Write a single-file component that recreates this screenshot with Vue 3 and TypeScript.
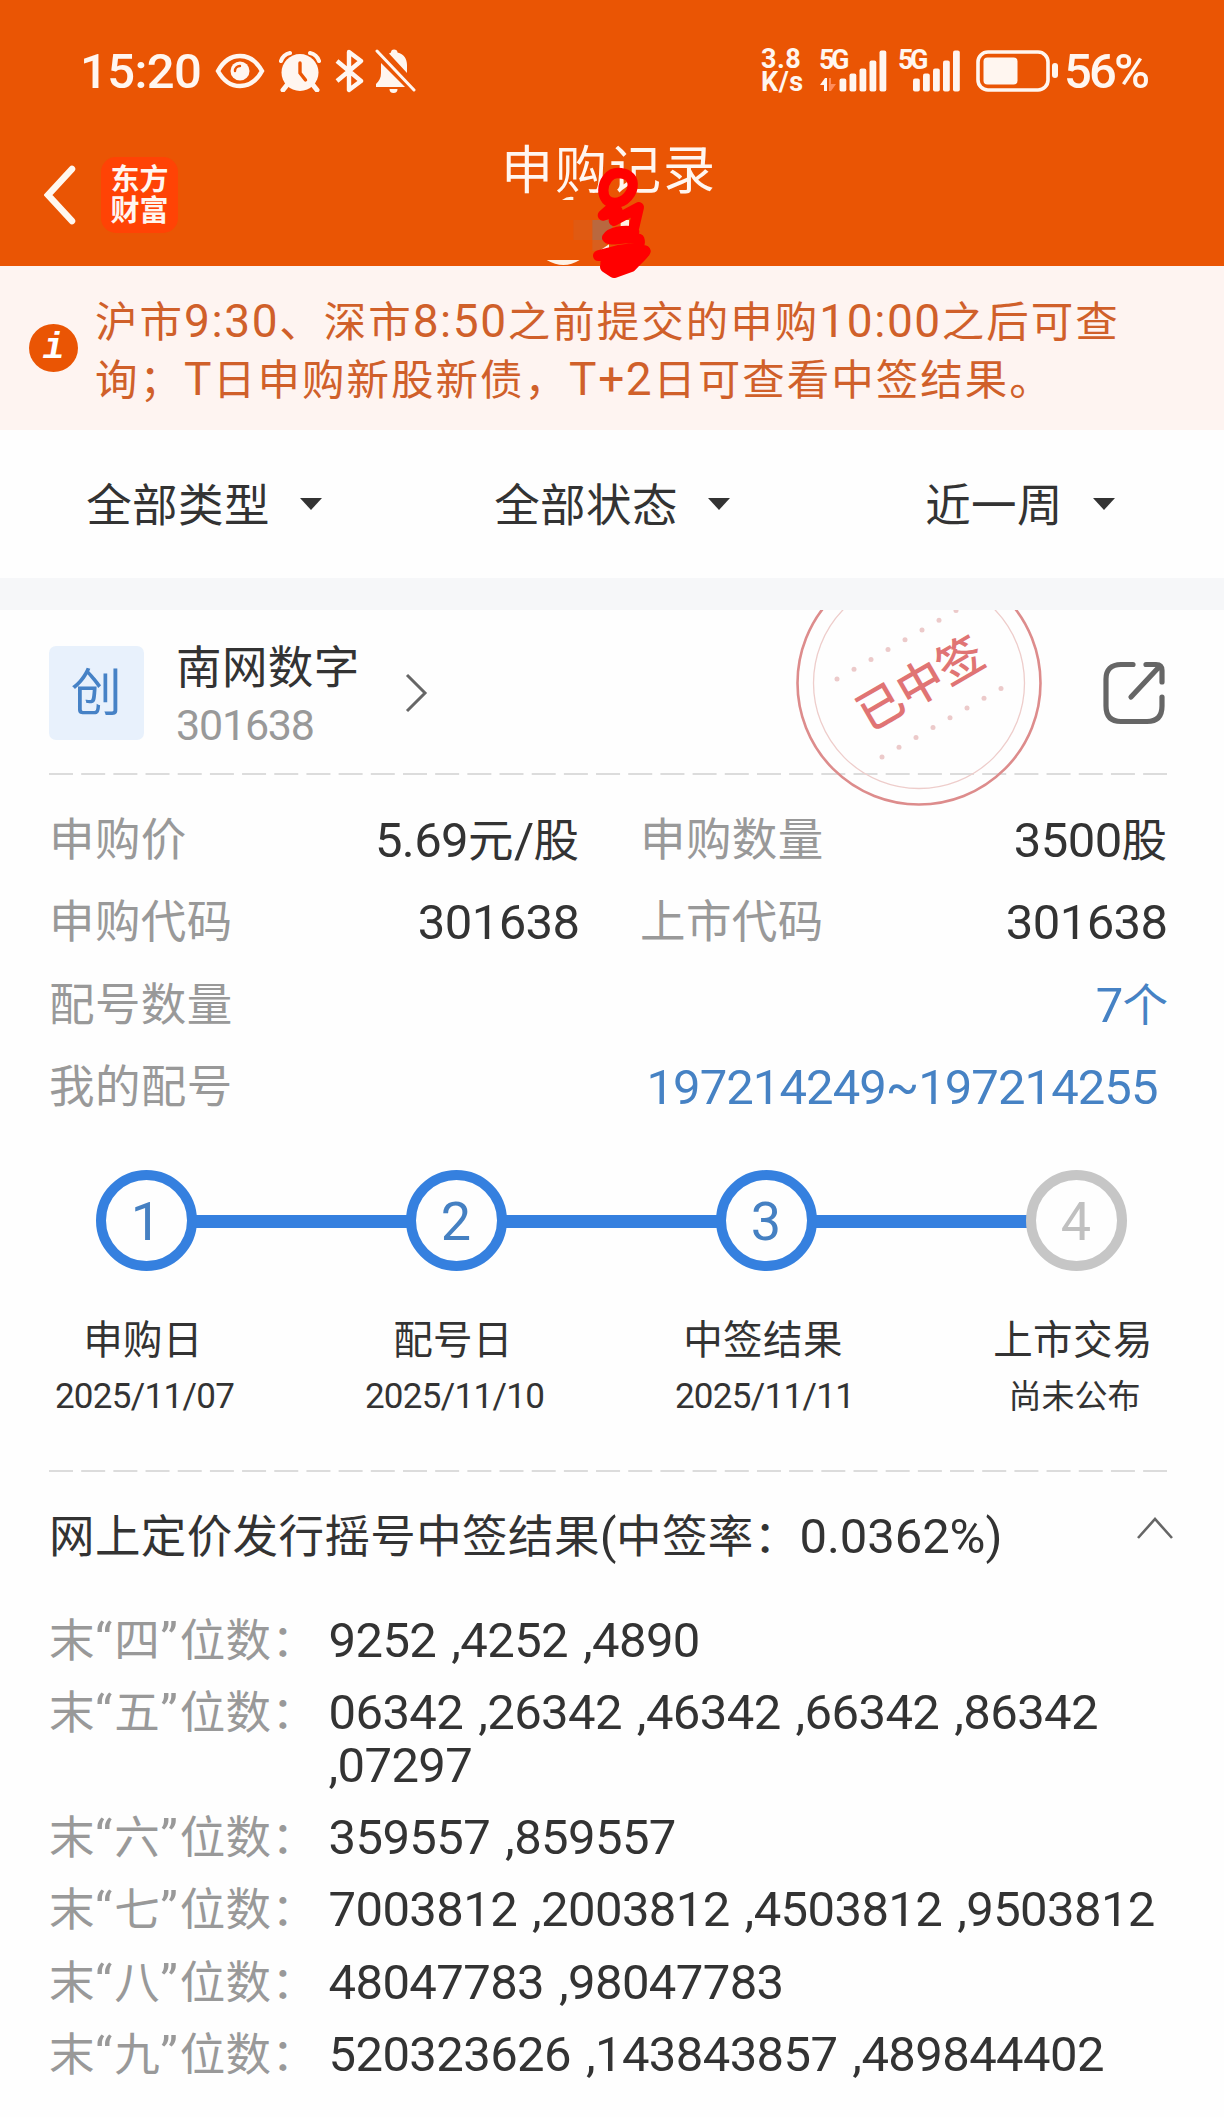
<script setup lang="ts">
interface Segment {
    text: string,
    num: boolean,
}

interface Step {
    no: number,
    label: string,
    date: string,
    done: boolean,
}

const filters = ['全部类型', '全部状态', '近一周'];

const notice = [
    '沪市9:30、深市8:50之前提交的申购10:00之后可查',
    '询；T日申购新股新债，T+2日可查看中签结果。',
];

const infoPairs = [
    { label: '申购价', value: '5.69元/股' },
    { label: '申购数量', value: '3500股' },
    { label: '申购代码', value: '301638' },
    { label: '上市代码', value: '301638' },
];

const steps: Step[] = [
    { no: 1, label: '申购日', date: '2025/11/07', done: true },
    { no: 2, label: '配号日', date: '2025/11/10', done: true },
    { no: 3, label: '中签结果', date: '2025/11/11', done: true },
    { no: 4, label: '上市交易', date: '尚未公布', done: false },
];

const results = [
    { digit: '四', numbers: '9252 ,4252 ,4890' },
    { digit: '五', numbers: '06342 ,26342 ,46342 ,66342 ,86342 ,07297' },
    { digit: '六', numbers: '359557 ,859557' },
    { digit: '七', numbers: '7003812 ,2003812 ,4503812 ,9503812' },
    { digit: '八', numbers: '48047783 ,98047783' },
    { digit: '九', numbers: '520323626 ,143843857 ,489844402' },
];

const signalHeights = [13, 18, 23, 31, 41];
const stampDots = [0, 1, 2, 3, 4, 5, 6, 7];

// latin runs are set slightly larger than the chinese ones
const split = (text: string): Segment[] =>
    (text.match(/[\x20-\x7e]+|[^\x20-\x7e]+/g) || []).map((part) => ({
        text: part,
        num: /^[\x20-\x7e]/.test(part),
    }));
</script>

<template>
    <div class="page">
        <header class="header">
            <div class="status">
                <div class="status-left">
                    <span class="time">15:20</span>
                    <svg class="i-eye" width="50" height="36" viewBox="0 0 50 36">
                        <path d="M3 18C9 7 17 3 25 3s16 4 22 15C41 29 33 33 25 33S9 29 3 18z" fill="none" stroke="#fff6f0" stroke-width="4.4" />
                        <circle cx="25" cy="18" r="9.5" fill="#fff6f0" />
                        <path d="M20 18a5 5 0 0 1 5-5" fill="none" stroke="#ea5504" stroke-width="2.4" stroke-linecap="round" />
                    </svg>
                    <svg class="i-alarm" width="42" height="42" viewBox="0 0 42 42">
                        <circle cx="21" cy="22.500" r="18.500" fill="#fff6f0" />
                        <path d="M2 11a12 12 0 0 1 9-8M40 11a12 12 0 0 0-9-8" fill="none" stroke="#fff6f0" stroke-width="4" stroke-linecap="round" />
                        <path d="M8 35l-4 5M34 35l4 5" stroke="#fff6f0" stroke-width="5" stroke-linecap="round" />
                        <path d="M21 13v10l5.500 7" fill="none" stroke="#ea5504" stroke-width="3.400" stroke-linecap="round" />
                    </svg>
                    <svg class="i-bt" width="30" height="44" viewBox="0 0 30 44">
                        <path d="M2 12l24 20-12 9V3l12 9L2 32" fill="none" stroke="#fff6f0" stroke-width="4.400" stroke-linejoin="round" />
                    </svg>
                    <svg class="i-bell" width="42" height="46" viewBox="0 0 42 46">
                        <path d="M19 1.500c2 0 3.500 1 3.500 3C29 6 32 11 32 17v8L14 5.500c.6-.4 1.300-.7 2-1 0-2 1-3 3-3zM6 15l24 24H1v-3c3-3 5-6 5-11z" fill="#fff6f0" />
                        <path d="M2 3l37 39" stroke="#fff6f0" stroke-width="3" stroke-linecap="round" />
                        <path d="M14.500 41h8a4 4 0 0 1-8 0z" fill="#fff6f0" />
                    </svg>
                </div>
                <div class="status-right">
                    <div class="speed">
                        <span>3.8</span>
                        <span>K/s</span>
                    </div>
                    <div
                        v-for="sim in 2"
                        :key="sim"
                        class="signal"
                        :class="{ first: sim === 1 }"
                    >
                        <span class="net">5G</span>
                        <svg class="bars" width="68" height="42" viewBox="0 0 68 42">
                            <rect
                                v-for="(height, i) in signalHeights"
                                :key="i"
                                :x="(sim === 1 ? 20.5 : 15) + i * 10"
                                :y="41.500 - height"
                                width="6.800"
                                :height="height"
                                rx="2"
                                fill="#fff6f0"
                            />
                            <g v-if="sim === 1">
                                <path d="M1 35l5-7h2v13H5v-6z" fill="#fff6f0" />
                                <path d="M10 28h2v6h5l-5 7h-2z" fill="#ff8c5a" />
                            </g>
                        </svg>
                    </div>
                    <svg class="battery" width="83" height="42" viewBox="0 0 83 42">
                        <rect x="2" y="2" width="70" height="38" rx="10" fill="none" stroke="#fff6f0" stroke-width="3.600" />
                        <rect x="7.500" y="7.500" width="34" height="27" rx="4" fill="#fff6f0" />
                        <rect x="76" y="13" width="6" height="15" rx="3" fill="#fff6f0" />
                    </svg>
                    <span class="percent">56%</span>
                </div>
            </div>
            <div class="nav">
                <div class="nav-left">
                    <svg width="34" height="60" viewBox="0 0 34 60">
                        <path d="M28 4L4 30l24 26" fill="none" stroke="#fff8f0" stroke-width="6.500" stroke-linecap="round" />
                    </svg>
                    <div class="logo">
                        <span>东方</span>
                        <span>财富</span>
                    </div>
                </div>
                <h1 class="title">申购记录</h1>
            </div>
            <svg class="scribble" width="140" height="145" viewBox="0 0 420 435">
                <path d="M130 240h58v60h-58z" fill="#e05a12" />
                <path d="M187 240h60v60h-60z" fill="#b9683f" />
                <path d="M187 300h40v32h-40z" fill="#d85f1e" />
                <path d="M50 360h99q-48 30-99 0zM96 180q16-12 34-9v9zM272 240h25v20h-25zM212 330l25-17v12z" fill="#fff3e6" />
                <g fill="none" stroke="#ff0000" stroke-linecap="round" stroke-linejoin="round">
                    <path d="M264 99c-26 0-44 26-44 52 0 24 14 38 34 38 30 0 56-30 54-58-1-20-20-32-44-32z" stroke-width="31" />
                    <path d="M260 190L219 226 262 212 252 242 326 202 312 262" stroke-width="32" />
                    <path d="M312 275c-32-6-72 2-80 18 6 12 62-6 95 4 10 30-30 30-62 34l-60 16h60l80-14c-18 30-50 46-66 50l-52-14 60-14 40-24" stroke-width="32" />
                    <path d="M228 380l24 16 50-18 42-44-62 10z" fill="#ff0000" stroke-width="36" />
                </g>
            </svg>
        </header>

        <section class="notice">
            <span class="notice-icon">i</span>
            <div class="notice-text">
                <p
                    v-for="(line, i) in notice"
                    :key="i"
                    class="notice-line"
                >
                    <span
                        v-for="(seg, j) in split(line)"
                        :key="j"
                        :class="{ num: seg.num }"
                    >{{ seg.text }}</span>
                </p>
            </div>
        </section>

        <section class="filters">
            <div
                v-for="name in filters"
                :key="name"
                class="filter"
            >
                <span>{{ name }}</span>
                <i class="caret" />
            </div>
        </section>

        <main class="card">
            <div class="stock">
                <span class="board">创</span>
                <div class="stock-name">
                    <span class="name">南网数字</span>
                    <span class="code">301638</span>
                </div>
                <svg class="go" width="24" height="40" viewBox="0 0 24 40">
                    <path d="M3 2l18 18L3 38" fill="none" stroke="#666" stroke-width="3" />
                </svg>
                <svg class="share" width="62" height="64" viewBox="0 0 62 64">
                    <path d="M30 3.500H18C8 3.500 3 9 3 18v27c0 10 5 15.500 15 15.500h26c10 0 15-5.500 15-15.500V36" fill="none" stroke="#666" stroke-width="5.200" stroke-linecap="round" />
                    <path d="M43 3.500h10c4 0 6 2 6 6V21M56 6L28 36" fill="none" stroke="#666" stroke-width="5.200" stroke-linecap="round" />
                </svg>
            </div>
            <svg class="stamp" width="250" height="198" viewBox="0 0 250 198">
                <circle cx="125" cy="73" r="121.500" fill="none" stroke="#dd8c8c" stroke-width="2.600" />
                <circle cx="125" cy="73" r="105.500" fill="none" stroke="#eecdcb" stroke-width="1.300" />
                <circle
                    v-for="dot in stampDots"
                    :key="'t' + dot"
                    :cx="43 + dot * 17"
                    :cy="69 - dot * 9.8"
                    r="2.500"
                    fill="#eccaca"
                />
                <circle
                    v-for="dot in stampDots"
                    :key="'b' + dot"
                    :cx="88 + dot * 17"
                    :cy="147 - dot * 9.8"
                    r="2.500"
                    fill="#eccaca"
                />
                <text x="126" y="90" text-anchor="middle" transform="rotate(-30 126 73)" class="stamp-text">已中签</text>
            </svg>

            <svg class="divider" width="1118" height="2" viewBox="0 0 1118 2">
                <path d="M0 1h1118" stroke="#dcdcdc" stroke-width="2" stroke-dasharray="24 8.180" />
            </svg>

            <div class="pairs">
                <div
                    v-for="(item, i) in infoPairs"
                    :key="i"
                    class="row"
                >
                    <span class="label">{{ item.label }}</span>
                    <span>
                        <span
                            v-for="(seg, j) in split(item.value)"
                            :key="j"
                            :class="{ num: seg.num }"
                        >{{ seg.text }}</span>
                    </span>
                </div>
            </div>
            <div class="row">
                <span class="label">配号数量</span>
                <span class="link"><span class="num">7</span>个</span>
            </div>
            <div class="row">
                <span class="label">我的配号</span>
                <span class="link range num">197214249~197214255</span>
            </div>

            <div class="steps">
                <div
                    v-for="step in steps"
                    :key="step.no"
                    class="step"
                    :class="{ todo: !step.done }"
                >
                    <span class="circle">{{ step.no }}</span>
                    <span class="step-label">{{ step.label }}</span>
                    <span class="step-date" :class="{ pending: !step.done }">{{ step.date }}</span>
                </div>
            </div>

            <svg class="divider" width="1118" height="2" viewBox="0 0 1118 2">
                <path d="M0 1h1118" stroke="#dcdcdc" stroke-width="2" stroke-dasharray="24 8.180" />
            </svg>

            <div class="result-head">
                <span>网上定价发行摇号中签结果<span class="num">(</span>中签率：<span class="num rate">0.0362%)</span></span>
                <svg width="38" height="24" viewBox="0 0 38 24">
                    <path d="M2 22L19 3l17 19" fill="none" stroke="#666" stroke-width="2.600" />
                </svg>
            </div>
            <div
                v-for="item in results"
                :key="item.digit"
                class="result"
            >
                <span class="result-label">末<span class="quote">“</span>{{ item.digit }}<span class="quote">”</span>位数：</span>
                <span class="result-value num">{{ item.numbers }}</span>
            </div>
        </main>
    </div>
</template>

<style>
body {
    margin: 0;
    background: #fefefe;
}
</style>

<style scoped>
.page {
    width: 1224px;
    height: 2117px;
    overflow: hidden;
    background: #fefefe;
    color: #333;
    font-family: Roboto, "Noto Sans CJK SC", sans-serif;
    font-size: 45.5px;
    letter-spacing: .4px;
    white-space: nowrap;
}

.page svg {
    display: block;
    flex: none;
}

.num {
    font-size: 49px;
    letter-spacing: -.6px;
}

/* header */
.header {
    position: relative;
    height: 266px;
    background: #ea5504;
    color: #fff6f0;
}

.status {
    display: flex;
    justify-content: space-between;
    height: 142px;
    padding: 0 73px 0 80px;
    font-weight: 500;
}

.status-left,
.status-right {
    display: flex;
    align-items: center;
}

.time,
.percent {
    margin-top: 2px;
    font-size: 49px;
    line-height: 60px;
    letter-spacing: -.6px;
}

.time {
    width: 135px;
}

.i-alarm {
    margin-left: 14px;
}

.i-bt {
    margin-left: 14px;
}

.i-bell {
    margin-left: 10px;
}

.speed {
    display: flex;
    flex-direction: column;
    width: 58px;
    font-size: 27px;
    font-weight: 700;
    line-height: 23px;
    letter-spacing: .5px;
}

.signal {
    position: relative;
    width: 64px;
    height: 42px;
    margin-right: 14px;
}

.signal.first {
    width: 68px;
    margin-right: 11px;
}

.net {
    position: absolute;
    top: -1px;
    left: 0;
    font-size: 27px;
    font-weight: 700;
    line-height: 22px;
    letter-spacing: -3.5px;
}

.battery {
    margin-right: 5px;
}

.percent {
    width: 87px;
    letter-spacing: -2.8px;
}

.nav {
    display: grid;
    grid-template-columns: 1fr auto 1fr;
    height: 106px;
}

.nav-left {
    display: flex;
    align-items: center;
    gap: 23px;
    padding-left: 44px;
}

.logo {
    display: flex;
    flex-direction: column;
    justify-content: center;
    align-items: center;
    width: 77px;
    height: 76px;
    box-sizing: border-box;
    padding-top: 2px;
    border-radius: 15px;
    background: #ff4305;
    font-size: 29px;
    font-weight: 700;
    line-height: 31px;
    letter-spacing: 0;
}

.title {
    margin: 0;
    padding-right: 6px;
    font-size: 52px;
    font-weight: 400;
    line-height: 60px;
    letter-spacing: 2px;
}

.scribble {
    position: absolute;
    top: 140px;
    left: 530px;
}

/* notice */
.notice {
    display: flex;
    align-items: center;
    height: 164px;
    box-sizing: border-box;
    padding: 0 0 0 29px;
    background: #fef4f1;
    color: #d0602a;
    font-size: 42.5px;
    letter-spacing: 2px;
}

.notice .num {
    font-size: 46px;
    letter-spacing: 1.6px;
}

.notice-icon {
    width: 49px;
    height: 48px;
    margin-right: 17px;
    border-radius: 50%;
    background: #ea5504;
    color: #fff;
    font: italic bold 36px/50px "Liberation Mono", monospace;
    letter-spacing: 0;
    text-align: center;
}

.notice-text {
    padding-top: 5px;
}

.notice-line {
    margin: 0;
    line-height: 57px;
}

/* filters */
.filters {
    display: grid;
    grid-template-columns: repeat(3, 1fr);
    height: 148px;
    border-bottom: 32px solid #f6f7f9;
}

.filter {
    display: flex;
    justify-content: center;
    align-items: center;
    gap: 30px;
}

.filter span {
    margin-top: -5px;
}

.caret {
    border: 11.5px solid transparent;
    border-top: 12px solid #333;
    border-bottom: 0;
}

/* card */
.card {
    position: relative;
    padding: 0 57px 0 49px;
}

.stock {
    display: flex;
    align-items: center;
    height: 163px;
    box-sizing: border-box;
    padding-top: 2px;
}

.board {
    width: 95px;
    height: 94px;
    margin-top: 1px;
    border-radius: 7px;
    background: #e8f1fc;
    color: #4682c6;
    font-size: 51px;
    line-height: 96px;
    text-align: center;
}

.stock-name {
    display: flex;
    flex-direction: column;
    width: 228px;
    margin-left: 32px;
    padding-top: 7px;
}

.name {
    line-height: 58px;
}

.code {
    color: #999;
    font-size: 43px;
    line-height: 55px;
    letter-spacing: -1.2px;
}

.share {
    margin-left: auto;
    margin-right: 2px;
}

.stamp {
    position: absolute;
    top: 0;
    left: 794px;
}

.stamp-text {
    fill: #e07474;
    font-size: 46px;
    font-weight: 500;
    letter-spacing: 0;
}

.pairs {
    display: grid;
    grid-template-columns: 529px 526px;
    column-gap: 62px;
    margin-top: 25px;
}

.row {
    display: flex;
    justify-content: space-between;
    margin-right: -1.5px;
    line-height: 81.3px;
}

.label {
    color: #999;
}

.link {
    color: #4682c4;
}

.range {
    padding-right: 11px;
    letter-spacing: -.95px;
}

/* steps */
.steps {
    display: grid;
    grid-template-columns: repeat(4, 310px);
    margin: 41.5px 0 45px -58px;
}

.step {
    position: relative;
    display: flex;
    flex-direction: column;
    align-items: center;
}

.step::before {
    content: "";
    position: absolute;
    top: 45px;
    right: 50%;
    width: 310px;
    height: 13px;
    background: #3580df;
}

.step:first-child::before {
    display: none;
}

.circle {
    position: relative;
    z-index: 1;
    width: 101px;
    height: 101px;
    box-sizing: border-box;
    border: 10px solid #3580df;
    border-radius: 50%;
    background: #fefefe;
    color: #4580c2;
    font-size: 54px;
    line-height: 83px;
    text-align: center;
}

.step:nth-child(-n+3) {
    z-index: 1;
}

.step:nth-child(2) {
    z-index: 2;
}

.step:nth-child(1) {
    z-index: 3;
}

.todo .circle {
    border-color: #c6c6c6;
    color: #c0c0c0;
}

.step-label {
    margin-top: 42px;
    padding-right: 6px;
    font-size: 39.5px;
    line-height: 56px;
}

.step-date {
    padding-right: 3px;
    font-size: 35px;
    line-height: 56px;
    letter-spacing: -.7px;
}

.pending {
    font-size: 33px;
    letter-spacing: 0;
}

/* lottery result */
.result-head {
    display: flex;
    justify-content: space-between;
    align-items: center;
    margin: 35px -7px 46px 0;
    line-height: 60px;
}

.result-head svg {
    margin-top: -18px;
}

.rate {
    letter-spacing: -.1px;
}

.result {
    display: flex;
    margin-bottom: 18.5px;
    line-height: 53px;
}

.result-label {
    flex: none;
    width: 279.5px;
    color: #999;
}

.quote {
    font-size: 49px;
    letter-spacing: 2px;
}

.result-value {
    white-space: normal;
    word-spacing: 3.4px;
}
</style>
